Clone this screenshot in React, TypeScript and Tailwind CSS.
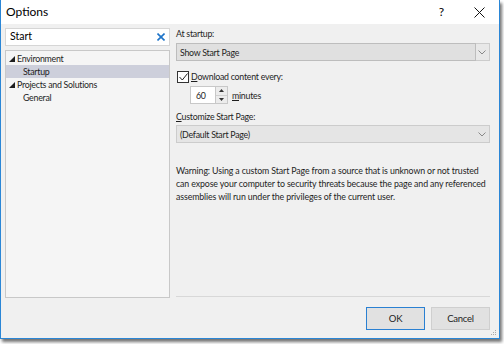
import React from 'react';

const font = { fontFamily: 'Lato, "Segoe UI", sans-serif' };

function Triangle() {
  return (
    <svg width="6" height="6" viewBox="0 0 6 6" className="mr-[2px]">
      <polygon points="6,0 6,6 0,6" fill="#1e1e1e" />
    </svg>
  );
}

function Chevron() {
  return (
    <svg width="8" height="5" viewBox="0 0 8 5">
      <polyline points="0.5,0.5 4,4 7.5,0.5" fill="none" stroke="#888" strokeWidth="1" />
    </svg>
  );
}

export default function App() {
  return (
    <div className="w-[504px] h-[344px] bg-white" style={font}>
      <div className="w-[500px] h-[339px] border-x border-b border-[#2a86d6] bg-[#f0f0f0] flex flex-col shadow-[2px_3px_3px_rgba(0,0,0,0.55)] text-[#1e1e1e]">
        {/* title bar */}
        <div className="h-[24px] bg-white flex items-center">
          <span className="ml-[5px] text-[12px] text-black">Options</span>
          <div className="flex-1" />
          <span className="text-[12px] text-black mr-[30px]">?</span>
          <svg width="11" height="11" viewBox="0 0 11 11" className="mr-[14px]">
            <line x1="0.5" y1="0.5" x2="10.5" y2="10.5" stroke="#111" strokeWidth="1" />
            <line x1="10.5" y1="0.5" x2="0.5" y2="10.5" stroke="#111" strokeWidth="1" />
          </svg>
        </div>

        <div className="flex-1 flex">
          {/* left column */}
          <div className="ml-[4px] mt-[4px] w-[165px] flex flex-col">
            <div className="h-[18px] bg-white border border-[#d6d6d6] flex items-center pl-[4px] pr-[3px]">
              <span className="text-[10.5px] text-black flex-1">Start</span>
              <svg width="8" height="8" viewBox="0 0 8 8" className="mr-[1px]">
                <line x1="0.5" y1="0.5" x2="7.5" y2="7.5" stroke="#1e74c9" strokeWidth="1.6" />
                <line x1="7.5" y1="0.5" x2="0.5" y2="7.5" stroke="#1e74c9" strokeWidth="1.6" />
              </svg>
            </div>
            <div className="mt-[4px] h-[248px] bg-[#f5f5f5] border border-[#c8c8c8] pt-[1px] text-[8.8px] tracking-[-0.25px] leading-[13px]">
              <div className="h-[13px] flex items-center pl-[3px]">
                <Triangle />
                <span>Environment</span>
              </div>
              <div className="h-[13px] flex items-center pl-[17px] bg-[#cdcfdb]">
                <span>Startup</span>
              </div>
              <div className="h-[13px] flex items-center pl-[3px]">
                <Triangle />
                <span>Projects and Solutions</span>
              </div>
              <div className="h-[13px] flex items-center pl-[17px]">
                <span>General</span>
              </div>
            </div>
          </div>

          {/* right column */}
          <div className="ml-[6px] w-[314px] flex flex-col text-[8.8px] tracking-[-0.25px] leading-[13px]">
            <div className="mt-[3px]">At startup:</div>
            <div className="mt-[3px] h-[18px] border border-[#cccccc] bg-[#e8e8e8] flex">
              <div className="flex-1 bg-[#e0e0e0] border border-[#bdbdbd] flex items-center pl-[3px] -m-[1px]">
                Show Start Page
              </div>
              <div className="w-[14px] flex items-center justify-center">
                <Chevron />
              </div>
            </div>

            <div className="mt-[9px] h-[13px] flex items-center">
              <div className="ml-[1px] w-[12px] h-[12px] bg-white border border-[#333] flex items-center justify-center">
                <svg width="9" height="8" viewBox="0 0 9 8">
                  <polyline points="0.5,4 3.3,7 8.5,0.5" fill="none" stroke="#222" strokeWidth="1" />
                </svg>
              </div>
              <span className="ml-[2px]">
                <span className="underline">D</span>ownload content every:
              </span>
            </div>

            <div className="mt-[3px] h-[18px] flex items-center">
              <div className="ml-[14px] w-[26px] h-[18px] bg-white border border-[#c8c8c8] flex items-center pl-[5px]">
                60
              </div>
              <div className="w-[12px] h-[18px] border border-l-0 border-[#c8c8c8] bg-[#ececec] flex flex-col">
                <div className="flex-1 flex items-center justify-center border-b border-[#d0d0d0]">
                  <svg width="5" height="3" viewBox="0 0 5 3"><polygon points="2.5,0 5,3 0,3" fill="#333" /></svg>
                </div>
                <div className="flex-1 flex items-center justify-center">
                  <svg width="5" height="3" viewBox="0 0 5 3"><polygon points="0,0 5,0 2.5,3" fill="#333" /></svg>
                </div>
              </div>
              <span className="ml-[4px]">
                <span className="underline">m</span>inutes
              </span>
            </div>

            <div className="mt-[6px]">
              <span className="underline">C</span>ustomize Start Page:
            </div>
            <div className="mt-[2px] h-[18px] border border-[#cccccc] bg-[#e5e5e5] flex items-center">
              <span className="flex-1 pl-[3px]">(Default Start Page)</span>
              <div className="w-[14px] flex items-center justify-center">
                <Chevron />
              </div>
            </div>

            <p className="mt-[21px] tracking-[-0.12px]">
              Warning: Using a custom Start Page from a source that is unknown or not trusted can expose your computer to security threats because the page and any referenced assemblies will run under the privileges of the current user.
            </p>

            <div className="flex-1" />
            <div className="h-px bg-[#d8d8d8]" />
            <div className="mt-[10px] mb-[8px] flex justify-end gap-[6px]">
              <button className="w-[59px] h-[23px] bg-[#e1e1e1] border border-[#2a80d2] text-[9.5px]">OK</button>
              <button className="w-[59px] h-[23px] bg-[#e1e1e1] border border-[#cfcfcf] text-[9.5px]">Cancel</button>
            </div>
          </div>
          <div className="flex-1 flex flex-col justify-end">
            <svg width="6" height="6" viewBox="0 0 6 6" className="mb-[2px] ml-auto mr-[2px]">
              <rect x="4" y="0" width="1" height="1" fill="#aaa" />
              <rect x="2" y="2" width="1" height="1" fill="#aaa" />
              <rect x="4" y="2" width="1" height="1" fill="#aaa" />
              <rect x="0" y="4" width="1" height="1" fill="#aaa" />
              <rect x="2" y="4" width="1" height="1" fill="#aaa" />
              <rect x="4" y="4" width="1" height="1" fill="#aaa" />
            </svg>
          </div>
        </div>
      </div>
    </div>
  );
}
